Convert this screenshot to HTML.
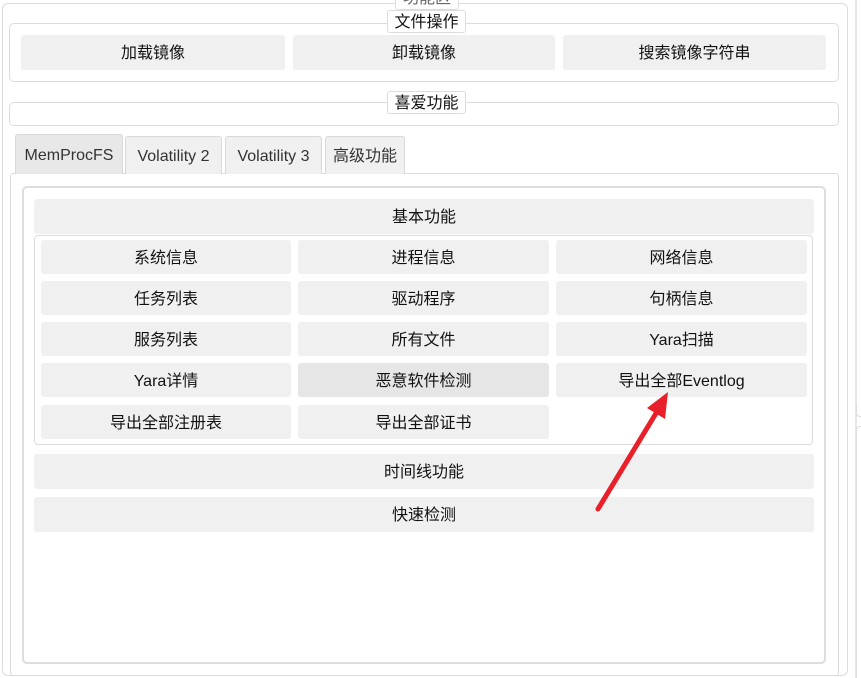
<!DOCTYPE html><html><head><meta charset="utf-8"><style>
body{margin:0;width:861px;height:678px;background:#fff;position:relative;overflow:hidden;font-family:"Liberation Sans","Noto Sans CJK SC",sans-serif;font-size:16px;color:#111}
.a{position:absolute;box-sizing:border-box}
.g{border:1px solid #dcdcdc;border-radius:5px}
.b{background:#f0f0f0;border-radius:3px;display:flex;align-items:center;justify-content:center;line-height:1;padding-top:3px}
.lb{background:#fff;border:1px solid #dcdcdc;border-radius:3px;display:flex;align-items:center;justify-content:center;font-size:16px;line-height:1;padding-top:2px}
.t{background:#f0f0f0;border:1px solid #d9d9d9;border-bottom:none;border-radius:3px 3px 0 0;display:flex;align-items:center;justify-content:center;color:#333;font-size:16px;line-height:1;padding-top:2px}
</style></head><body>
<div class="a g" style="left:2px;top:3px;width:846px;height:673px;border-radius:6px"></div>
<div class="a lb" style="left:395px;top:-12px;width:64px;height:22px;color:#666;align-items:flex-end;padding-bottom:2px">功能区</div>
<div class="a g" style="left:9px;top:23px;width:830px;height:59px"></div>
<div class="a lb" style="left:387px;top:10px;width:79px;height:23px">文件操作</div>
<div class="a b" style="left:21px;top:35px;width:264px;height:35px">加载镜像</div>
<div class="a b" style="left:293px;top:35px;width:262px;height:35px">卸载镜像</div>
<div class="a b" style="left:563px;top:35px;width:263px;height:35px">搜索镜像字符串</div>
<div class="a g" style="left:9px;top:102px;width:830px;height:24px"></div>
<div class="a lb" style="left:387px;top:91px;width:79px;height:23px">喜爱功能</div>
<div class="a g" style="left:10px;top:173px;width:829px;height:503px;border-radius:3px"></div>
<div class="a t" style="left:15px;top:134px;width:108px;height:40px;background:#e8e8e8">MemProcFS</div>
<div class="a t" style="left:125px;top:136px;width:97px;height:38px">Volatility 2</div>
<div class="a t" style="left:225px;top:136px;width:97px;height:38px">Volatility 3</div>
<div class="a t" style="left:325px;top:136px;width:80px;height:38px">高级功能</div>
<div class="a" style="left:22px;top:186px;width:804px;height:478px;border:2px solid #ddd;border-radius:5px"></div>
<div class="a b" style="left:34px;top:199px;width:780px;height:35px">基本功能</div>
<div class="a g" style="left:34px;top:235px;width:779px;height:210px;border-radius:4px"></div>
<div class="a b" style="left:41px;top:240px;width:250px;height:34px">系统信息</div>
<div class="a b" style="left:298px;top:240px;width:251px;height:34px">进程信息</div>
<div class="a b" style="left:556px;top:240px;width:251px;height:34px">网络信息</div>
<div class="a b" style="left:41px;top:281px;width:250px;height:34px">任务列表</div>
<div class="a b" style="left:298px;top:281px;width:251px;height:34px">驱动程序</div>
<div class="a b" style="left:556px;top:281px;width:251px;height:34px">句柄信息</div>
<div class="a b" style="left:41px;top:322px;width:250px;height:34px">服务列表</div>
<div class="a b" style="left:298px;top:322px;width:251px;height:34px">所有文件</div>
<div class="a b" style="left:556px;top:322px;width:251px;height:34px">Yara扫描</div>
<div class="a b" style="left:41px;top:363px;width:250px;height:34px">Yara详情</div>
<div class="a b" style="left:298px;top:363px;width:251px;height:34px;background:#e6e6e6">恶意软件检测</div>
<div class="a b" style="left:556px;top:363px;width:251px;height:34px">导出全部Eventlog</div>
<div class="a b" style="left:41px;top:405px;width:250px;height:34px">导出全部注册表</div>
<div class="a b" style="left:298px;top:405px;width:251px;height:34px">导出全部证书</div>
<div class="a b" style="left:34px;top:454px;width:780px;height:35px">时间线功能</div>
<div class="a b" style="left:34px;top:497px;width:780px;height:35px">快速检测</div>
<div class="a" style="left:855px;top:0;width:2px;height:678px;background:#e6e6e6"></div>
<div class="a" style="left:856px;top:405px;width:5px;height:12px;border:1px solid #ddd;border-right:none;border-top:none;border-radius:0 0 0 4px"></div>
<div class="a" style="left:856px;top:426px;width:5px;height:252px;border:1px solid #ddd;border-right:none;border-bottom:none;border-radius:4px 0 0 0"></div>
<svg class="a" style="left:0;top:0" width="861" height="678"><line x1="598" y1="509" x2="658" y2="410" stroke="#e8202a" stroke-width="5" stroke-linecap="round"/><polygon points="668,392 665,419 647,408" fill="#e8202a"/></svg>
</body></html>
